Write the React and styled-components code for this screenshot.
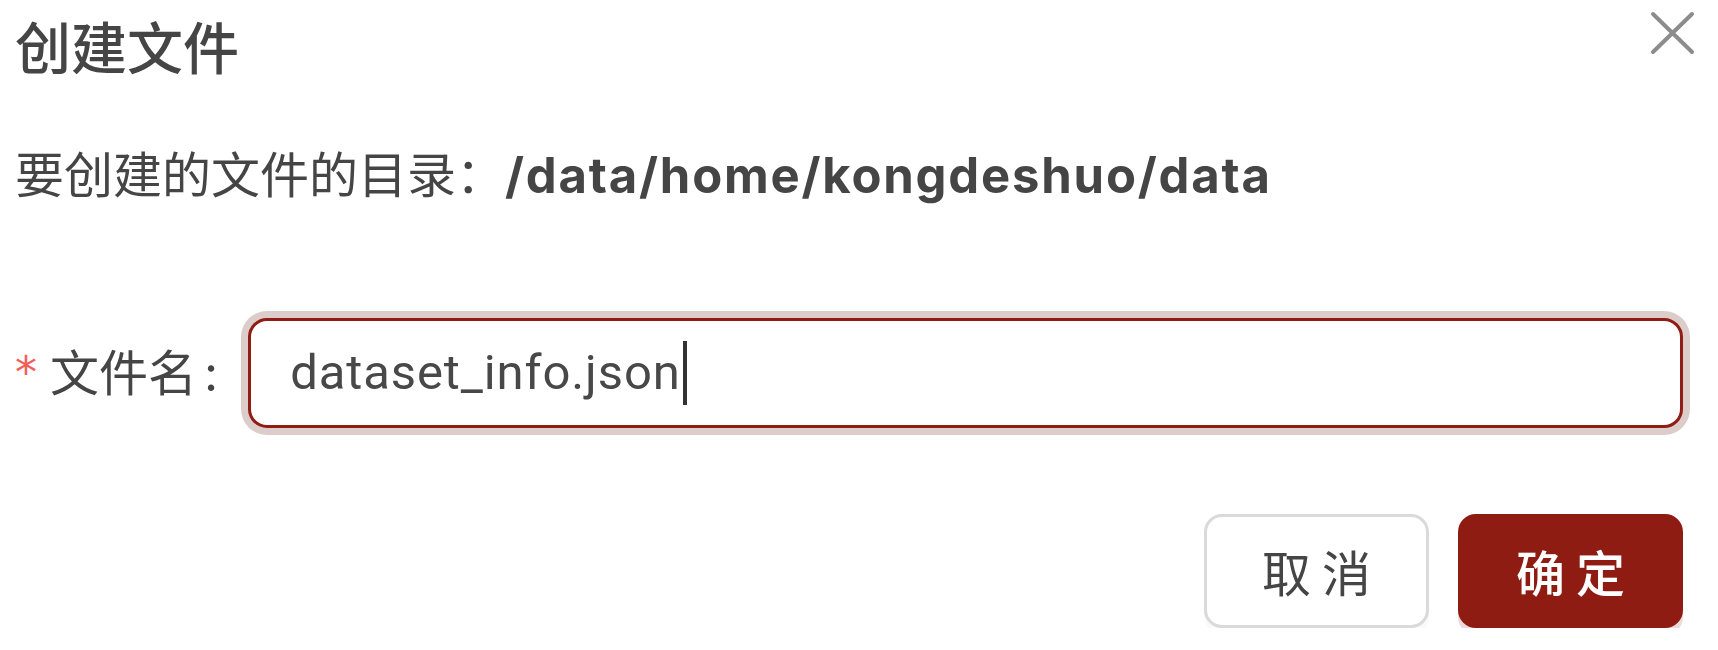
import React from "react";
import styled, { createGlobalStyle } from "styled-components";

const GlobalStyle = createGlobalStyle`
  html, body {
    margin: 0;
    padding: 0;
    background: #ffffff;
  }
  body {
    font-family: "Inter", "Noto Sans CJK SC", sans-serif;
    color: #454545;
  }
`;

const Dialog = styled.div`
  width: 1718px;
  box-sizing: border-box;
  padding: 0 35px 0 15px;
`;

const Header = styled.div`
  display: flex;
  justify-content: space-between;
  align-items: flex-start;
`;

const Title = styled.h1`
  margin: 0;
  padding-top: 3px;
  font-family: "Noto Sans CJK SC", sans-serif;
  font-size: 56px;
  line-height: 84px;
  font-weight: 500;
  color: #454545;
`;

const CloseButton = styled.button`
  margin: 11px -12px 0 0;
  padding: 0;
  width: 45px;
  height: 44px;
  border: none;
  background: transparent;
  cursor: pointer;
  svg {
    display: block;
  }
`;

const Directory = styled.p`
  margin: 48px 0 0;
  font-family: "Noto Sans CJK SC", sans-serif;
  font-size: 49px;
  line-height: 73.5px;
  color: #454545;
  strong {
    font-family: "Inter", "Noto Sans CJK SC", sans-serif;
    font-weight: 700;
    letter-spacing: 1.8px;
  }
`;

const FormRow = styled.div`
  display: flex;
  align-items: center;
  margin-top: 105px;
`;

const Label = styled.label`
  display: flex;
  align-items: baseline;
  font-family: "Noto Sans CJK SC", sans-serif;
  font-size: 49px;
  line-height: 73.5px;
  color: #454545;
`;

const Required = styled.span`
  margin-right: 13px;
  color: #f0605a;
  font-family: "DejaVu Sans", sans-serif;
  font-size: 44px;
  position: relative;
  top: -3px;
`;

const Colon = styled.span`
  margin: 0 30px 0 7px;
  font-family: "Inter", sans-serif;
`;

const InputBox = styled.div`
  flex: 1;
  display: flex;
  align-items: center;
  box-sizing: border-box;
  height: 110px;
  padding: 0 39px;
  border: 3.5px solid #8f1d14;
  border-radius: 19px;
  box-shadow: 0 0 0 7px #dccdcb;
  background: #ffffff;
`;

const Value = styled.span`
  font-family: "Roboto", sans-serif;
  font-size: 49px;
  line-height: 73.5px;
  letter-spacing: 0.9px;
  color: #484848;
`;

const Caret = styled.span`
  width: 4px;
  height: 64px;
  margin-left: 2px;
  background: #333333;
`;

const Footer = styled.div`
  display: flex;
  justify-content: flex-end;
  gap: 29px;
  margin-top: 86px;
`;

const Button = styled.button`
  box-sizing: border-box;
  width: 225px;
  height: 114px;
  padding: 0;
  border-radius: 18px;
  font-family: "Noto Sans CJK SC", sans-serif;
  font-size: 49px;
  font-weight: ${props => (props.$primary ? 500 : 400)};
  cursor: pointer;
  border: 3.5px solid ${props => (props.$primary ? "#8f1c13" : "#dadada")};
  background: ${props => (props.$primary ? "#8f1c13" : "#ffffff")};
  color: ${props => (props.$primary ? "#ffffff" : "#454545")};
  box-shadow: 0 7px 0
    ${props => (props.$primary ? "rgba(143, 28, 19, 0.16)" : "rgba(0, 0, 0, 0.02)")};
`;

const CloseIcon = () => (
  <svg width="45" height="44" viewBox="0 0 45 44">
    <path
      d="M3 3 L42 41 M42 3 L3 41"
      stroke="#8c8c8c"
      strokeWidth="4"
      strokeLinecap="round"
      fill="none"
    />
  </svg>
);

const App = () => {
  return (
    <>
      <GlobalStyle />
      <Dialog>
        {/* Title */}
        <Header>
          <Title>创建文件</Title>
          <CloseButton aria-label="close">
            <CloseIcon />
          </CloseButton>
        </Header>

        {/* Target directory */}
        <Directory>
          要创建的文件的目录：<strong>/data/home/kongdeshuo/data</strong>
        </Directory>

        {/* File name */}
        <FormRow>
          <Label>
            <Required>*</Required>
            文件名
            <Colon>:</Colon>
          </Label>
          <InputBox>
            <Value>dataset_info.json</Value>
            <Caret />
          </InputBox>
        </FormRow>

        {/* Actions */}
        <Footer>
          <Button>取 消</Button>
          <Button $primary>确 定</Button>
        </Footer>
      </Dialog>
    </>
  );
};

export default App;
